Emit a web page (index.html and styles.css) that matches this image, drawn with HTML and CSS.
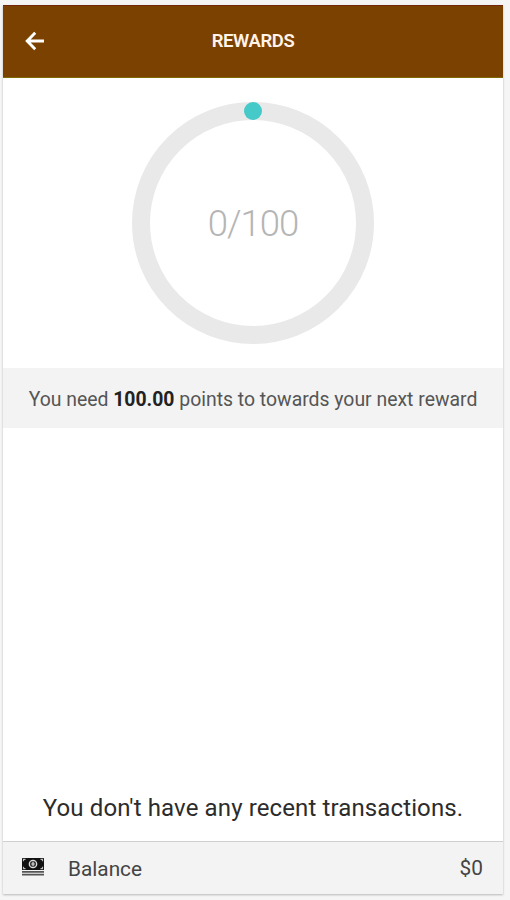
FILE: index.html
```html
<!DOCTYPE html>
<html lang="en">
<head>
<meta charset="utf-8">
<title>Rewards</title>
<link rel="stylesheet" href="styles.css">
</head>
<body>
<main class="screen">
  <header class="bar">
    <svg class="back" viewBox="0 0 20 20" width="20" height="20" aria-hidden="true"><path d="M10.2 1.8 2.2 10l8 8.2M2.5 10H19"/></svg>
    <h1 class="title">REWARDS</h1>
  </header>
  <section class="progress">
    <div class="ring"><span class="dot"></span><span class="count">0/100</span></div>
  </section>
  <p class="notice"><span>You need <b>100.00</b> points to towards your next reward</span></p>
  <section class="history"><p class="empty">You don't have any recent transactions.</p></section>
  <footer class="balance">
    <svg class="cash" viewBox="0 0 22 18" width="22" height="18" aria-hidden="true">
      <rect width="22" height="12" rx=".5" fill="#111"/>
      <path d="M1.5 3.2V1.3h2M18.5 1.3h2v1.9M1.5 8.8v1.9h2M18.5 10.7h2V8.8" fill="none" stroke="#bbb" stroke-width="1.2"/>
      <circle cx="11" cy="6" r="3.7" fill="#333" stroke="#ddd" stroke-width="1.3"/>
      <path d="M11 3.8v4.4M9.2 6h3.6" stroke="#ddd" stroke-width="1.2"/>
      <path d="M0 13.8h22M0 16.7h22" stroke="#555" stroke-width="1.8"/>
    </svg>
    <span class="label">Balance</span>
    <span class="amount">$0</span>
  </footer>
</main>
</body>
</html>
```
FILE: styles.css
```css
* { box-sizing: border-box; }
body {
  margin: 0;
  height: 900px;
  padding: 5px 7px 6px 3px;
  background: #f5f5f5;
  font-family: Roboto, "Liberation Sans", sans-serif;
  overflow: hidden;
}
.screen {
  display: flex;
  flex-direction: column;
  height: 889px;
  background: #fff;
  box-shadow: 0 1px 2px rgba(0, 0, 0, .25);
}
.bar {
  display: grid;
  grid-template-columns: 64px 1fr 64px;
  align-items: center;
  height: 73px;
  padding-bottom: 1px;
  background: #7a4100;
  border-top: 1px solid #74270a;
  border-bottom: 1px solid #7c6a00;
  color: #fff3ea;
}
.back {
  margin-left: 22px;
  fill: none;
  stroke: #fff;
  stroke-width: 2.9;
}
.title {
  margin: 0;
  text-align: center;
  font-size: 18.5px;
  font-weight: 600;
  letter-spacing: -.4px;
}
.progress {
  display: flex;
  justify-content: center;
  height: 290px;
  padding-top: 24px;
}
.ring {
  position: relative;
  display: grid;
  place-items: center;
  width: 242px;
  height: 242px;
  border: 18px solid #e9e9e9;
  border-radius: 50%;
}
.dot {
  position: absolute;
  top: -18px;
  left: 94px;
  width: 18px;
  height: 18px;
  border-radius: 50%;
  background: #45c9c9;
}
.count {
  font-size: 36.5px;
  font-weight: 300;
  letter-spacing: -1px;
  color: #b5b5b5;
}
.notice {
  display: grid;
  place-items: center;
  height: 60px;
  margin: 0;
  padding-top: 2px;
  background: #f3f3f3;
  font-size: 19.4px;
  color: #555;
  white-space: nowrap;
}
.notice b { color: #222; }
.history {
  display: flex;
  flex: 1;
  align-items: flex-end;
  justify-content: center;
  padding-bottom: 18px;
}
.empty {
  margin: 0;
  font-size: 24px;
  line-height: 30px;
  letter-spacing: .12px;
  color: #2c2c2c;
  white-space: nowrap;
}
.balance {
  display: flex;
  align-items: center;
  height: 53px;
  padding: 0 20px 0 19px;
  background: #f3f3f3;
  border-top: 1px solid #cfcfcf;
  font-size: 20.8px;
  color: #444;
}
.cash { margin-bottom: 3px; }
.label { margin-left: 24px; padding-top: 1px; }
.amount { margin-left: auto; }
```
